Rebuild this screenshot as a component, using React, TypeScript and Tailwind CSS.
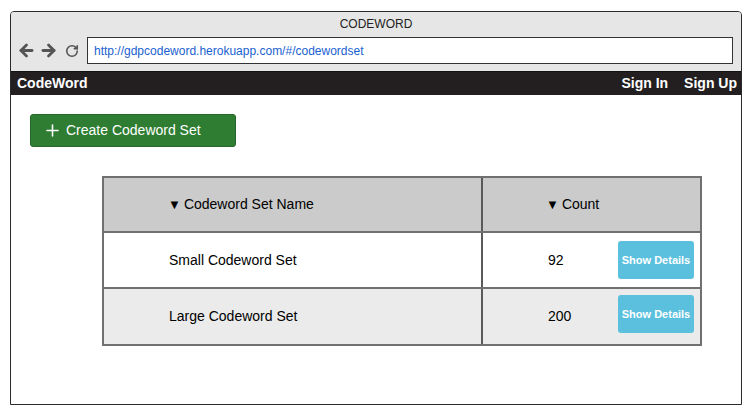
import React from 'react'
import { ArrowLeft, ArrowRight, RotateCw, Plus } from 'lucide-react'

const rows = [
  { name: 'Small Codeword Set', count: 92, bg: 'bg-white', h: 'h-[56px] border-b-2 border-[#707070]', btn: '' },
  { name: 'Large Codeword Set', count: 200, bg: 'bg-[#ebebeb]', h: 'h-[55px]', btn: 'mb-[5px]' },
]

export default function App() {
  return (
    <div className="w-[755px] h-[420px] bg-white pt-[11px] pl-[10px] font-['Liberation_Sans',Arial,sans-serif]">
      <div className="w-[732px] h-[394px] border border-[#2a2a2a] rounded-t-[4px] flex flex-col overflow-hidden">
        {/* browser chrome */}
        <div className="bg-[#e6e6e6] h-[59px] flex flex-col">
          <div className="h-[24px] flex items-center justify-center text-[12px] text-[#222]">
            CODEWORD
          </div>
          <div className="flex items-center pl-[6px] mt-[1px]">
            <div className="flex items-center gap-[3px] text-[#555]">
              <ArrowLeft size={19} strokeWidth={3.5} />
              <ArrowRight size={19} strokeWidth={3.5} />
              <RotateCw size={14} strokeWidth={2.75} className="ml-[4px]" />
            </div>
            <div className="ml-[8px] w-[646px] h-[27px] bg-white border border-[#333] flex items-center px-[6px] text-[12px] text-[#1a5fd0]">
              http://gdpcodeword.herokuapp.com/#/codewordset
            </div>
          </div>
        </div>
        {/* nav */}
        <div className="h-[24px] bg-[#231f20] border-t border-[#111] flex items-center justify-between pl-[6px] pr-[4px] text-white font-bold text-[14px]">
          <span>CodeWord</span>
          <div className="flex gap-[16px]">
            <span>Sign In</span>
            <span>Sign Up</span>
          </div>
        </div>
        {/* content */}
        <div className="flex-1 bg-white pl-[19px] pt-[19px]">
          <button className="w-[206px] h-[33px] bg-[#2e7d32] border border-[#25662a] rounded-[3px] flex items-center pl-[12px] text-white text-[14px]">
            <Plus size={19} strokeWidth={2} className="mr-[4px]" />
            Create Codeword Set
          </button>
          <div className="ml-[72px] mt-[29px] w-[600px] border-2 border-[#707070]">
            <div className="flex h-[55px] bg-[#cbcbcb] border-b-2 border-[#707070]">
              <div className="w-[379px] border-r-2 border-[#5a5a5a] flex items-center pl-[64px] text-[14px] text-black">
                <span className="text-[13px] mr-[3px]">▼</span>Codeword Set Name
              </div>
              <div className="flex-1 flex items-center pl-[63px] text-[14px] text-black">
                <span className="text-[13px] mr-[3px]">▼</span>Count
              </div>
            </div>
            {rows.map((r) => (
              <div key={r.name} className={`flex ${r.h} ${r.bg}`}>
                <div className="w-[379px] border-r-2 border-[#5a5a5a] flex items-center pl-[65px] text-[14px] text-black">
                  {r.name}
                </div>
                <div className="flex-1 flex items-center pl-[65px] pr-[6px] text-[14px] text-black">
                  <span className="flex-1">{r.count}</span>
                  <button className={`w-[76px] h-[38px] bg-[#5bc0de] rounded-[3px] text-white font-bold text-[11px] ${r.btn}`}>
                    Show Details
                  </button>
                </div>
              </div>
            ))}
          </div>
        </div>
      </div>
    </div>
  )
}
